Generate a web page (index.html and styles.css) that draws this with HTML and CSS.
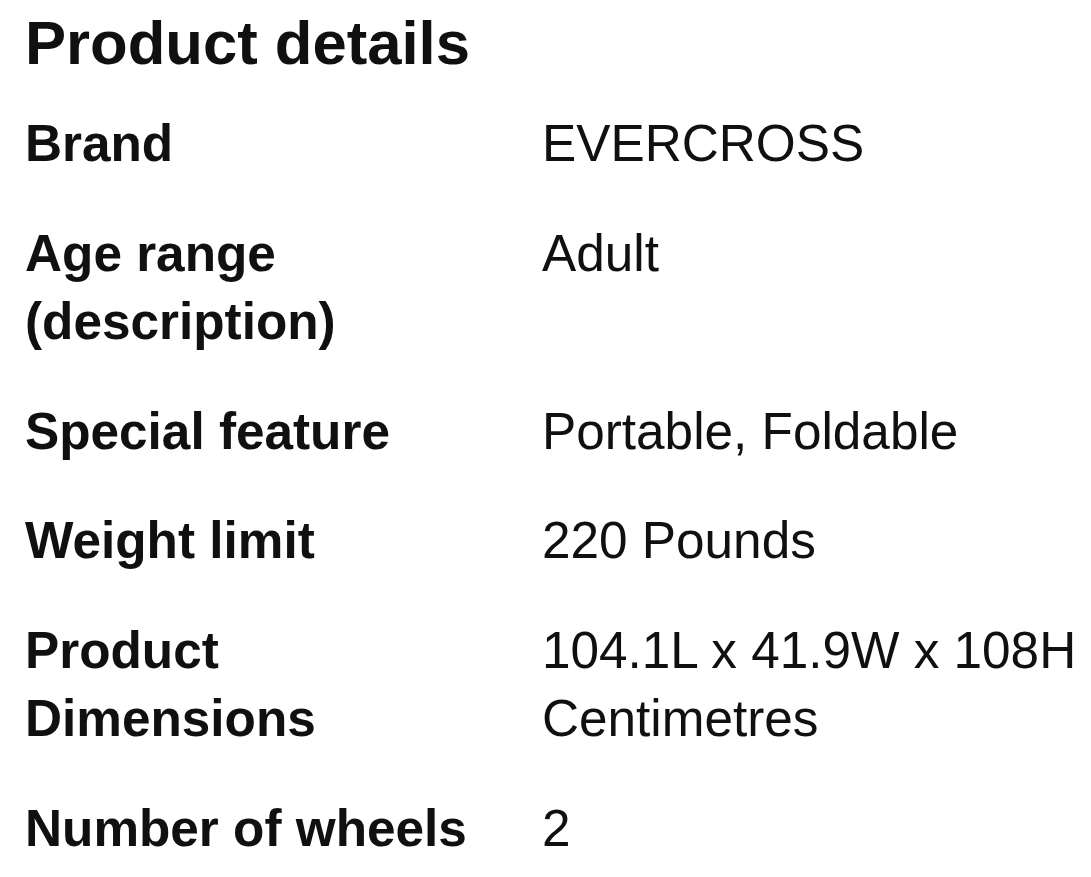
FILE: index.html
```html
<!DOCTYPE html>
<html lang="en">
<head>
<meta charset="utf-8">
<title>Product details</title>
<link rel="stylesheet" href="styles.css">
</head>
<body>
<main class="details">
  <h1 class="title">Product details</h1>
  <div class="grid">
    <div class="label">Brand</div><div class="value">EVERCROSS</div>
    <div class="label">Age range (description)</div><div class="value">Adult</div>
    <div class="label">Special feature</div><div class="value">Portable, Foldable</div>
    <div class="label">Weight limit</div><div class="value">220 Pounds</div>
    <div class="label">Product Dimensions</div><div class="value">104.1L x 41.9W x 108H Centimetres</div>
    <div class="label">Number of wheels</div><div class="value">2</div>
  </div>
</main>
</body>
</html>
```
FILE: styles.css
```css
html, body {
  margin: 0;
  background: #ffffff;
}
body {
  font-family: "Liberation Sans", Arial, sans-serif;
  color: #0f1111;
}
.details {
  padding: 8px 0 0 25px;
}
.title {
  margin: 0;
  font-size: 61.6px;
  line-height: 70px;
  font-weight: 700;
}
.grid {
  display: grid;
  grid-template-columns: 470px 1fr;
  column-gap: 47px;
  row-gap: 41.1px;
  margin-top: 32px;
  font-size: 51.3px;
  line-height: 68.5px;
}
.label {
  font-weight: 700;
}
.value {
  font-weight: 400;
  padding-right: 8px;
}
```
